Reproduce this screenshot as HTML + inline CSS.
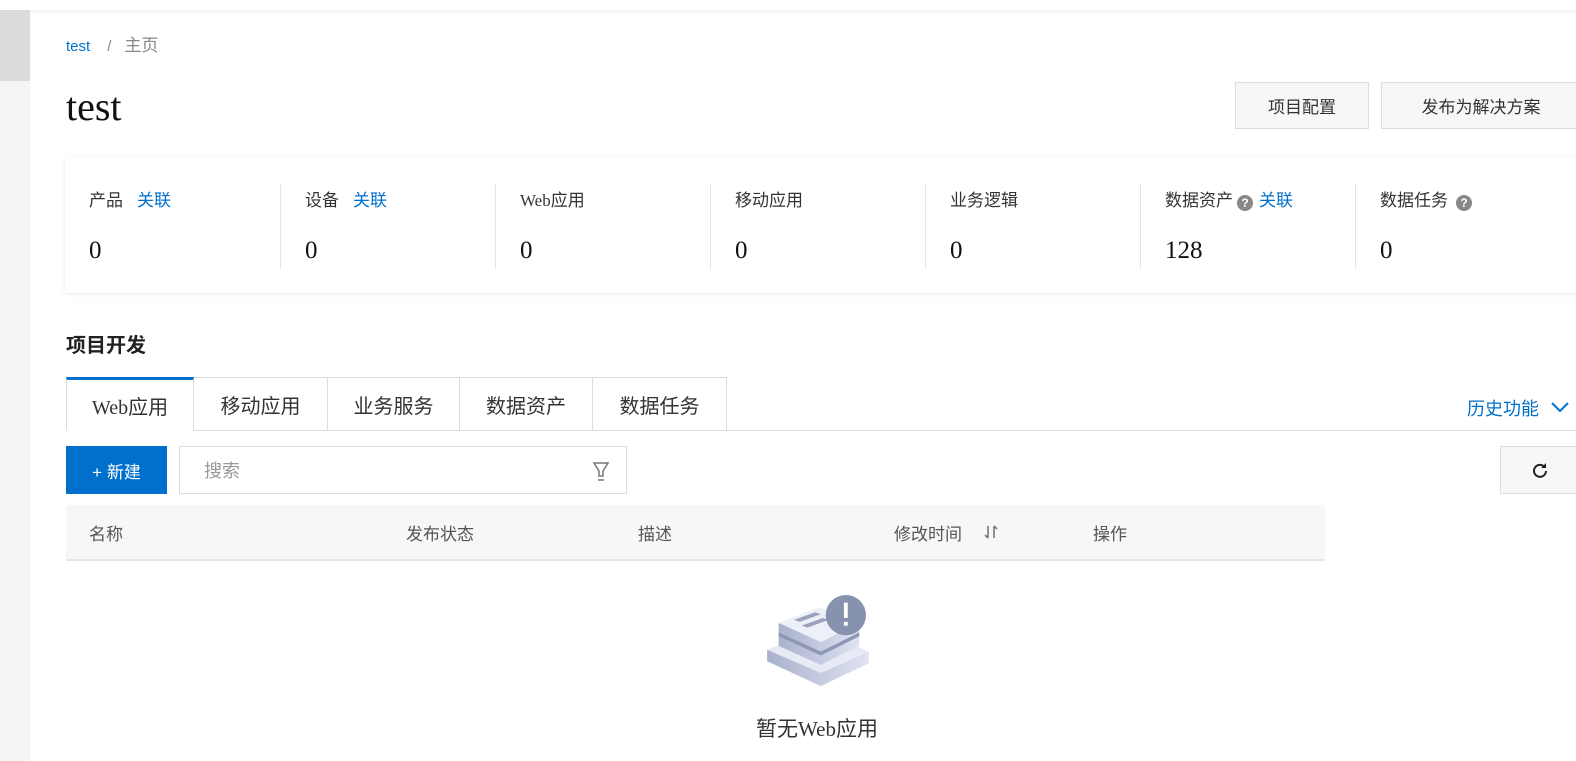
<!DOCTYPE html>
<html><head><meta charset="utf-8"><style>
*{margin:0;padding:0;box-sizing:border-box}
body{width:1576px;height:761px;overflow:hidden;background:#fff;font-family:"Liberation Serif","Noto Sans CJK SC",serif;color:#333;position:relative}
.a{position:absolute}
.sans{font-family:"Liberation Sans","Noto Sans CJK SC",sans-serif}
.blue{color:#0070cc}
.btn{position:absolute;border:1px solid #dcdcdc;background:#f7f7f7;font-size:17px;color:#333;display:flex;align-items:center;justify-content:center}
.col{position:absolute;top:184px;height:85px;border-left:1px solid #e6e6e6}
.lbl{position:absolute;top:186px;font-size:17px;color:#333}
.num{position:absolute;top:237px;font-size:25px;color:#111}
.tab{position:absolute;top:377px;height:54px;border:1px solid #dcdcdc;border-left:none;font-size:20px;color:#333;display:flex;align-items:center;justify-content:center}
.th{position:absolute;top:520px;font-size:17px;color:#555}
.q{display:inline-block;width:16px;height:16px;border-radius:50%;background:#888;color:#fff;font:bold 12px/16px "Liberation Sans",sans-serif;text-align:center;vertical-align:-1px;margin-left:4px}
</style></head><body>
<div class="a" style="left:0;top:0;width:1576px;height:10px;background:#fff;box-shadow:0 2px 4px rgba(0,0,0,.06)"></div>
<div class="a" style="left:0;top:10px;width:30px;height:751px;background:#f4f4f4"></div>
<div class="a" style="left:0;top:10px;width:30px;height:71px;background:#dcdcdc"></div>

<div class="a sans" style="left:66px;top:31px;font-size:15px"><span class="blue">test</span><span style="color:#888;margin:0 13px 0 17px">/</span><span style="color:#888;font-size:17px">主页</span></div>
<div class="a" style="left:66px;top:83px;font-size:40px;color:#111">test</div>
<div class="btn sans" style="left:1235px;top:82px;width:134px;height:47px">项目配置</div>
<div class="btn sans" style="left:1381px;top:82px;width:200px;height:47px">发布为解决方案</div>

<div class="a" style="left:65px;top:158px;width:1520px;height:135px;background:#fff;box-shadow:0 1px 5px rgba(0,0,0,.08)"></div>
<div class="lbl sans" style="left:89px">产品<span class="blue" style="margin-left:14px">关联</span></div><div class="num" style="left:89px">0</div>
<div class="col" style="left:280px"></div>
<div class="lbl sans" style="left:305px">设备<span class="blue" style="margin-left:14px">关联</span></div><div class="num" style="left:305px">0</div>
<div class="col" style="left:495px"></div>
<div class="lbl" style="left:520px">Web应用</div><div class="num" style="left:520px">0</div>
<div class="col" style="left:710px"></div>
<div class="lbl sans" style="left:735px">移动应用</div><div class="num" style="left:735px">0</div>
<div class="col" style="left:925px"></div>
<div class="lbl sans" style="left:950px">业务逻辑</div><div class="num" style="left:950px">0</div>
<div class="col" style="left:1140px"></div>
<div class="lbl sans" style="left:1165px">数据资产<span class="q">?</span><span class="blue" style="margin-left:6px">关联</span></div><div class="num" style="left:1165px">128</div>
<div class="col" style="left:1355px"></div>
<div class="lbl sans" style="left:1380px">数据任务<span class="q" style="margin-left:8px">?</span></div><div class="num" style="left:1380px">0</div>

<div class="a sans" style="left:66px;top:329px;font-size:20px;font-weight:bold;color:#222">项目开发</div>

<div class="a" style="left:66px;top:430px;width:1510px;height:1px;background:#dcdcdc"></div>
<div class="tab blue" style="left:66px;width:128px;border-left:1px solid #dcdcdc;border-top:3px solid #0070cc;border-bottom-color:#fff">Web应用</div>
<div class="tab sans" style="left:194px;width:134px">移动应用</div>
<div class="tab sans" style="left:328px;width:132px">业务服务</div>
<div class="tab sans" style="left:460px;width:133px">数据资产</div>
<div class="tab sans" style="left:593px;width:134px">数据任务</div>
<div class="a sans blue" style="left:1467px;top:395px;font-size:18px">历史功能</div>
<svg class="a" style="left:1550px;top:400px" width="20" height="14"><path d="M2 3l8 8 8-8" fill="none" stroke="#0070cc" stroke-width="2"/></svg>

<div class="a sans" style="left:66px;top:446px;width:101px;height:48px;background:#0070cc;color:#fff;font-size:17px;display:flex;align-items:center;justify-content:center">+ 新建</div>
<div class="a sans" style="left:179px;top:446px;width:448px;height:48px;border:1px solid #dcdcdc;color:#999;font-size:18px;padding:10px 0 0 24px">搜索</div>
<svg class="a" style="left:591px;top:460px" width="20" height="22"><path d="M3 3h14l-5 8v5h-4v-5z" fill="none" stroke="#777" stroke-width="1.5"/><path d="M7 20h6" stroke="#777" stroke-width="1.5"/></svg>
<div class="btn" style="left:1500px;top:446px;width:80px;height:48px"><svg width="18" height="18" viewBox="0 0 18 18"><path d="M14 6.5A6 6 0 1 0 15 10" fill="none" stroke="#222" stroke-width="2"/><path d="M15 2v5h-5z" fill="#222"/></svg></div>

<div class="a" style="left:66px;top:505px;width:1259px;height:56px;background:#f7f7f7;border-bottom:2px solid #e6e6e6"></div>
<div class="th sans" style="left:89px">名称</div>
<div class="th sans" style="left:406px">发布状态</div>
<div class="th sans" style="left:638px">描述</div>
<div class="th sans" style="left:894px">修改时间</div>
<svg class="a" style="left:983px;top:524px" width="16" height="16"><path d="M5 2v12M5 14l-3-3M11 14V2M11 2l3 3" fill="none" stroke="#777" stroke-width="1.6"/></svg>
<div class="th sans" style="left:1093px">操作</div>

<svg class="a" style="left:763px;top:594px" width="110" height="96" viewBox="0 0 110 100">
<defs><linearGradient id="g" x1="0" x2="1"><stop offset="0" stop-color="#a9b1cc"/><stop offset="1" stop-color="#dfe3f1"/></linearGradient></defs>
<path d="M2 58l56 24 50-22v12l-50 24L2 70z" fill="url(#g)"/>
<path d="M2 58l54-20 52 22-50 22z" fill="#e8ebf5"/>
<path d="M14 30l44 20 40-20v24l-40 20-44-20z" fill="url(#g)"/>
<path d="M14 30l42-16 42 16-40 20z" fill="#edf0f8"/>
<path d="M14 40l44 20 40-20v4l-40 20-44-20z" fill="#8e97b5"/>
<path d="M30 27l22-8 6 2-22 8zM38 33l22-8 6 2-22 8z" fill="#9aa2be"/>
<circle cx="84" cy="22" r="21" fill="#8793ae"/>
<rect x="82" y="9" width="4" height="16" fill="#fff"/><rect x="82" y="29" width="4" height="4" fill="#fff"/>
</svg>
<div class="a" style="left:756px;top:713px;font-size:21px;color:#333">暂无Web应用</div>
</body></html>
